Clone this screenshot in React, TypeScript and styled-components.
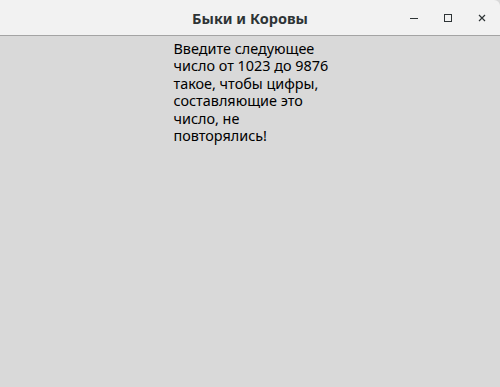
import React from "react";
import styled, { createGlobalStyle } from "styled-components";

const GlobalStyle = createGlobalStyle`
  html, body {
    margin: 0;
    padding: 0;
    background: #d9d9d9;
  }
`;

const Window = styled.div`
  width: 500px;
  height: 387px;
  display: flex;
  flex-direction: column;
  background: #d9d9d9;
  font-family: "Noto Sans", "Open Sans", sans-serif;
  overflow: hidden;
`;

const TitleBar = styled.div`
  position: relative;
  height: 35px;
  flex: none;
  display: flex;
  align-items: center;
  justify-content: center;
  background: #f2f2f2;
  border-bottom: 1px solid #a4a4a4;
  border-top-right-radius: 6px;
`;

const Title = styled.div`
  font-size: 14.5px;
  font-weight: 700;
  color: #2e3436;
`;

const Controls = styled.div`
  position: absolute;
  right: 1px;
  top: 0;
  bottom: 0;
  display: flex;
  align-items: center;
`;

const ControlButton = styled.div`
  width: 34px;
  height: 24px;
  display: flex;
  align-items: center;
  justify-content: center;
  color: #2e3436;
`;

const Content = styled.div`
  flex: 1;
  display: flex;
  justify-content: center;
  padding-top: 4px;
`;

const Message = styled.div`
  width: 156px;
  margin-left: 3px;
  font-size: 14.4px;
  line-height: 17.4px;
  color: #000;
`;

export default function App() {
  return (
    <>
      <GlobalStyle />
      <Window>
        <TitleBar>
          <Title>Быки и Коровы</Title>
          <Controls>
            <ControlButton>
              <svg width="10" height="10" viewBox="0 0 10 10">
                <path d="M1 5.5h8" stroke="#2e3436" strokeWidth="1" />
              </svg>
            </ControlButton>
            <ControlButton>
              <svg width="10" height="10" viewBox="0 0 10 10">
                <rect x="1.5" y="1.5" width="7" height="7" fill="none" stroke="#2e3436" strokeWidth="1" />
              </svg>
            </ControlButton>
            <ControlButton>
              <svg width="10" height="10" viewBox="0 0 10 10">
                <path d="M2 2l6 6M8 2l-6 6" stroke="#2e3436" strokeWidth="1.2" />
              </svg>
            </ControlButton>
          </Controls>
        </TitleBar>
        <Content>
          <Message>
            Введите следующее число от 1023 до 9876 такое, чтобы цифры,
            составляющие это число, не повторялись!
          </Message>
        </Content>
      </Window>
    </>
  );
}
